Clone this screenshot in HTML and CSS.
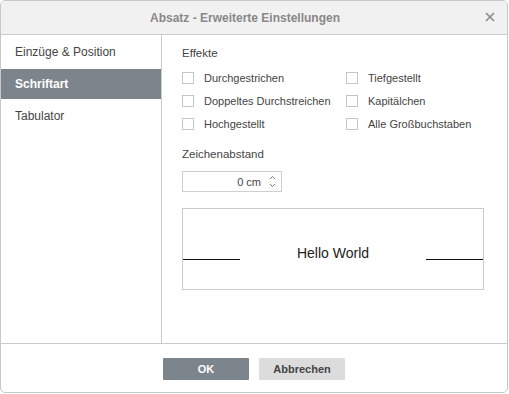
FILE: index.html
```html
<!DOCTYPE html>
<html lang="de">
<head>
<meta charset="utf-8">
<link rel="stylesheet" href="styles.css">
</head>
<body>
<div class="dialog">
  <div class="header">
    <span class="title">Absatz - Erweiterte Einstellungen</span>
    <svg class="close" width="10" height="10" viewBox="0 0 10 10"><path d="M1 1L9 9M9 1L1 9" stroke="#8a8a8a" stroke-width="1.6"/></svg>
  </div>
  <div class="body">
    <div class="sidebar">
      <div class="item">Einzüge &amp; Position</div>
      <div class="item active">Schriftart</div>
      <div class="item">Tabulator</div>
    </div>
    <div class="content">
      <div class="label">Effekte</div>
      <div class="checks">
        <div class="check"><span class="box"></span>Durchgestrichen</div>
        <div class="check"><span class="box"></span>Tiefgestellt</div>
        <div class="check"><span class="box"></span>Doppeltes Durchstreichen</div>
        <div class="check"><span class="box"></span>Kapitälchen</div>
        <div class="check"><span class="box"></span>Hochgestellt</div>
        <div class="check"><span class="box"></span>Alle Großbuchstaben</div>
      </div>
      <div class="label spacing-label">Zeichenabstand</div>
      <div class="spin">
        <span class="spin-value">0 cm</span>
        <span class="spin-arrows">
          <svg width="7" height="5" viewBox="0 0 7 5"><path d="M1 4L3.5 1.5L6 4" fill="none" stroke="#777" stroke-width="1"/></svg>
          <svg width="7" height="5" viewBox="0 0 7 5"><path d="M1 1L3.5 3.5L6 1" fill="none" stroke="#777" stroke-width="1"/></svg>
        </span>
      </div>
      <div class="preview">
        <span class="pline"></span>
        <span class="ptext">Hello World</span>
        <span class="pline"></span>
      </div>
    </div>
  </div>
  <div class="footer">
    <button class="btn primary">OK</button>
    <button class="btn secondary">Abbrechen</button>
  </div>
</div>
</body>
</html>
```
FILE: styles.css
```css
* { box-sizing: border-box; }
html, body { margin: 0; padding: 0; background: #fff; }
body { font-family: "Liberation Sans", Arial, sans-serif; font-size: 11px; color: #444; }

.dialog {
  width: 508px;
  height: 393px;
  border: 1px solid #c8c8c8;
  border-radius: 5px;
  overflow: hidden;
  display: flex;
  flex-direction: column;
}

.header {
  height: 34px;
  flex: none;
  background: #f1f1f1;
  border-bottom: 1px solid #cbcbcb;
  display: flex;
  align-items: center;
  justify-content: center;
  padding-right: 18px;
  position: relative;
}
.title { font-size: 12px; font-weight: bold; color: #888; }
.close { position: absolute; right: 12px; top: 11px; }

.body { flex: 1; display: flex; min-height: 0; }

.sidebar {
  width: 161px;
  flex: none;
  border-right: 1px solid #cbcbcb;
  padding-top: 2px;
}
.item {
  height: 30px;
  margin-bottom: 2px;
  padding-left: 14px;
  display: flex;
  align-items: center;
  font-size: 12px;
  color: #444;
}
.item.active { background: #7d858c; color: #fff; font-weight: bold; }

.content { flex: 1; padding: 10px 0 0 20px; }

.label { font-size: 11.5px; line-height: 16px; color: #444; }

.checks {
  margin-top: 5px;
  display: grid;
  grid-template-columns: 164px auto;
  grid-auto-rows: 23px;
}
.check { display: flex; align-items: center; font-size: 11px; color: #444; }
.box {
  width: 12px;
  height: 12px;
  border: 1px solid #c6c6c6;
  margin-right: 10px;
  flex: none;
}

.spacing-label { margin-top: 11px; }

.spin {
  margin-top: 9px;
  width: 100px;
  height: 21px;
  border: 1px solid #cfcfcf;
  display: flex;
  align-items: center;
  justify-content: flex-end;
}
.spin-value { font-size: 11px; color: #444; margin-right: 4px; }
.spin-arrows {
  width: 14px;
  display: flex;
  flex-direction: column;
  align-items: center;
  gap: 3px;
  margin-right: 2px;
}
.spin-arrows svg { display: block; }

.preview {
  margin-top: 16px;
  width: 302px;
  height: 82px;
  border: 1px solid #cbcbcb;
  display: flex;
  justify-content: space-between;
  align-items: flex-start;
}
.pline { width: 57px; height: 1px; background: #111; margin-top: 50px; }
.ptext { font-size: 14px; line-height: 16px; color: #222; margin-top: 36px; }

.footer {
  height: 49px;
  flex: none;
  border-top: 1px solid #cbcbcb;
  display: flex;
  justify-content: center;
  align-items: flex-start;
  gap: 10px;
  padding-top: 14px;
}
.btn {
  width: 86px;
  height: 22px;
  border: none;
  border-radius: 1px;
  font-family: "Liberation Sans", Arial, sans-serif;
  font-size: 11px;
  font-weight: bold;
  padding: 0;
}
.primary { background: #7d858c; color: #fff; }
.secondary { background: #dcdcdc; color: #444; }
```
